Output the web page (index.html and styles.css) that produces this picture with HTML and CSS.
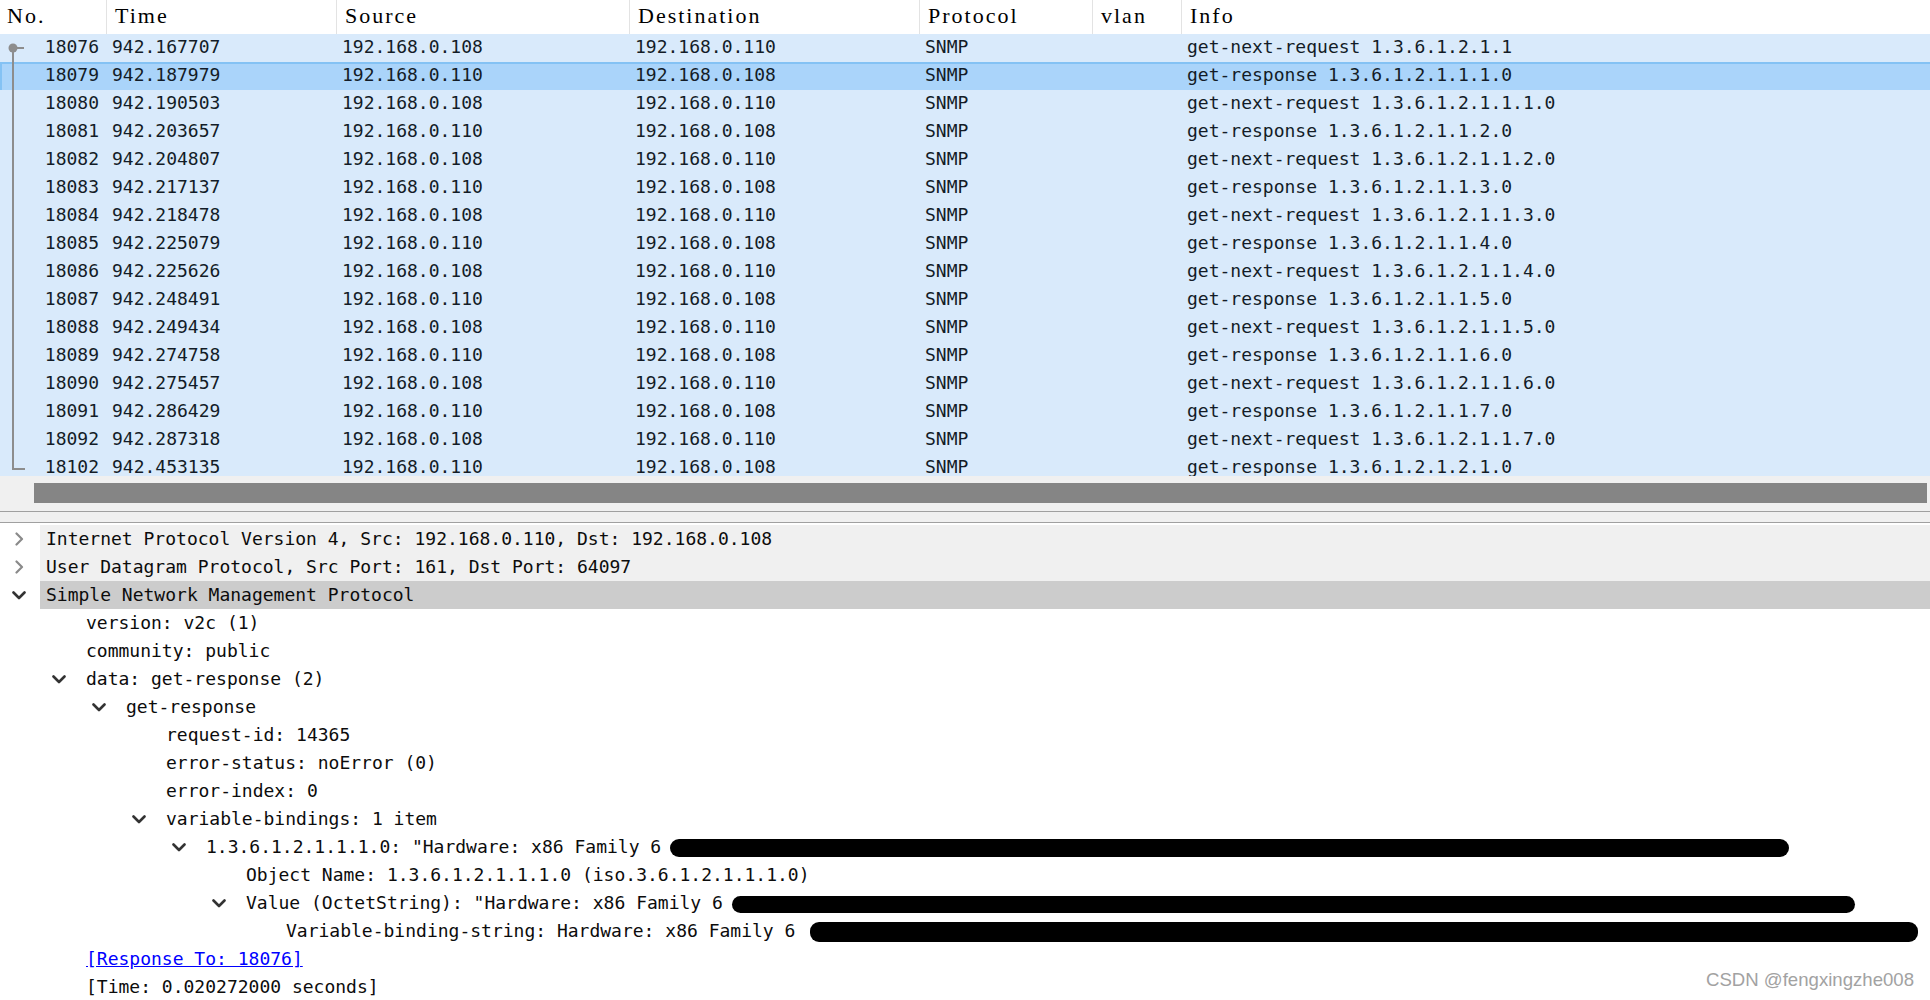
FILE: index.html
```html
<!DOCTYPE HTML>
<html>
<head>
<link rel="stylesheet" href="styles.css">
</head>
<body>
<div id="app" class="app">
    <section class="packet-list">
        <div class="list-header">
            <span>No.</span>
            <span>Time</span>
            <span>Source</span>
            <span>Destination</span>
            <span>Protocol</span>
            <span>vlan</span>
            <span>Info</span>
        </div>
        <div class="rows">
            <div class="packet"><span class="no">18076</span><span>942.167707</span><span>192.168.0.108</span><span>192.168.0.110</span><span>SNMP</span><span></span><span>get-next-request 1.3.6.1.2.1.1</span></div>
            <div class="packet selected"><span class="no">18079</span><span>942.187979</span><span>192.168.0.110</span><span>192.168.0.108</span><span>SNMP</span><span></span><span>get-response 1.3.6.1.2.1.1.1.0</span></div>
            <div class="packet"><span class="no">18080</span><span>942.190503</span><span>192.168.0.108</span><span>192.168.0.110</span><span>SNMP</span><span></span><span>get-next-request 1.3.6.1.2.1.1.1.0</span></div>
            <div class="packet"><span class="no">18081</span><span>942.203657</span><span>192.168.0.110</span><span>192.168.0.108</span><span>SNMP</span><span></span><span>get-response 1.3.6.1.2.1.1.2.0</span></div>
            <div class="packet"><span class="no">18082</span><span>942.204807</span><span>192.168.0.108</span><span>192.168.0.110</span><span>SNMP</span><span></span><span>get-next-request 1.3.6.1.2.1.1.2.0</span></div>
            <div class="packet"><span class="no">18083</span><span>942.217137</span><span>192.168.0.110</span><span>192.168.0.108</span><span>SNMP</span><span></span><span>get-response 1.3.6.1.2.1.1.3.0</span></div>
            <div class="packet"><span class="no">18084</span><span>942.218478</span><span>192.168.0.108</span><span>192.168.0.110</span><span>SNMP</span><span></span><span>get-next-request 1.3.6.1.2.1.1.3.0</span></div>
            <div class="packet"><span class="no">18085</span><span>942.225079</span><span>192.168.0.110</span><span>192.168.0.108</span><span>SNMP</span><span></span><span>get-response 1.3.6.1.2.1.1.4.0</span></div>
            <div class="packet"><span class="no">18086</span><span>942.225626</span><span>192.168.0.108</span><span>192.168.0.110</span><span>SNMP</span><span></span><span>get-next-request 1.3.6.1.2.1.1.4.0</span></div>
            <div class="packet"><span class="no">18087</span><span>942.248491</span><span>192.168.0.110</span><span>192.168.0.108</span><span>SNMP</span><span></span><span>get-response 1.3.6.1.2.1.1.5.0</span></div>
            <div class="packet"><span class="no">18088</span><span>942.249434</span><span>192.168.0.108</span><span>192.168.0.110</span><span>SNMP</span><span></span><span>get-next-request 1.3.6.1.2.1.1.5.0</span></div>
            <div class="packet"><span class="no">18089</span><span>942.274758</span><span>192.168.0.110</span><span>192.168.0.108</span><span>SNMP</span><span></span><span>get-response 1.3.6.1.2.1.1.6.0</span></div>
            <div class="packet"><span class="no">18090</span><span>942.275457</span><span>192.168.0.108</span><span>192.168.0.110</span><span>SNMP</span><span></span><span>get-next-request 1.3.6.1.2.1.1.6.0</span></div>
            <div class="packet"><span class="no">18091</span><span>942.286429</span><span>192.168.0.110</span><span>192.168.0.108</span><span>SNMP</span><span></span><span>get-response 1.3.6.1.2.1.1.7.0</span></div>
            <div class="packet"><span class="no">18092</span><span>942.287318</span><span>192.168.0.108</span><span>192.168.0.110</span><span>SNMP</span><span></span><span>get-next-request 1.3.6.1.2.1.1.7.0</span></div>
            <div class="packet"><span class="no">18102</span><span>942.453135</span><span>192.168.0.110</span><span>192.168.0.108</span><span>SNMP</span><span></span><span>get-response 1.3.6.1.2.1.2.1.0</span></div>
        </div>

        <!-- related packets marker -->
        <svg class="related" width="30" height="476" viewBox="0 0 30 476">
            <g stroke="#8d8d8d" stroke-width="2" fill="none">
                <line x1="13" y1="48" x2="24" y2="48"/>
                <line x1="13" y1="48" x2="13" y2="469"/>
                <line x1="12" y1="469" x2="25" y2="469"/>
            </g>
            <circle cx="13" cy="48" r="4.5" fill="#8d8d8d"/>
        </svg>
    </section>

    <div class="hscroll"><div class="thumb"></div></div>
    <div class="splitter"></div>

    <section class="detail">
        <div class="tree-row lvl0 top"><span class="toggle"><svg class="closed" width="9" height="14" viewBox="0 0 9 14"><polyline points="1.5,1.5 7,7 1.5,12.5"/></svg></span><span class="label">Internet Protocol Version 4, Src: 192.168.0.110, Dst: 192.168.0.108</span></div>
        <div class="tree-row lvl0 top"><span class="toggle"><svg class="closed" width="9" height="14" viewBox="0 0 9 14"><polyline points="1.5,1.5 7,7 1.5,12.5"/></svg></span><span class="label">User Datagram Protocol, Src Port: 161, Dst Port: 64097</span></div>
        <div class="tree-row lvl0 current"><span class="toggle"><svg class="open" width="14" height="9" viewBox="0 0 14 9"><polyline points="1.5,1.5 7,7 12.5,1.5"/></svg></span><span class="label">Simple Network Management Protocol</span></div>
        <div class="tree-row lvl1"><span class="toggle"></span><span class="label">version: v2c (1)</span></div>
        <div class="tree-row lvl1"><span class="toggle"></span><span class="label">community: public</span></div>
        <div class="tree-row lvl1"><span class="toggle"><svg class="open" width="14" height="9" viewBox="0 0 14 9"><polyline points="1.5,1.5 7,7 12.5,1.5"/></svg></span><span class="label">data: get-response (2)</span></div>
        <div class="tree-row lvl2"><span class="toggle"><svg class="open" width="14" height="9" viewBox="0 0 14 9"><polyline points="1.5,1.5 7,7 12.5,1.5"/></svg></span><span class="label">get-response</span></div>
        <div class="tree-row lvl3"><span class="toggle"></span><span class="label">request-id: 14365</span></div>
        <div class="tree-row lvl3"><span class="toggle"></span><span class="label">error-status: noError (0)</span></div>
        <div class="tree-row lvl3"><span class="toggle"></span><span class="label">error-index: 0</span></div>
        <div class="tree-row lvl3"><span class="toggle"><svg class="open" width="14" height="9" viewBox="0 0 14 9"><polyline points="1.5,1.5 7,7 12.5,1.5"/></svg></span><span class="label">variable-bindings: 1 item</span></div>
        <div class="tree-row lvl4"><span class="toggle"><svg class="open" width="14" height="9" viewBox="0 0 14 9"><polyline points="1.5,1.5 7,7 12.5,1.5"/></svg></span><span class="label">1.3.6.1.2.1.1.1.0: "Hardware: x86 Family 6 <span class="redact r1"></span></span></div>
        <div class="tree-row lvl5"><span class="toggle"></span><span class="label">Object Name: 1.3.6.1.2.1.1.1.0 (iso.3.6.1.2.1.1.1.0)</span></div>
        <div class="tree-row lvl5"><span class="toggle"><svg class="open" width="14" height="9" viewBox="0 0 14 9"><polyline points="1.5,1.5 7,7 12.5,1.5"/></svg></span><span class="label">Value (OctetString): "Hardware: x86 Family 6 <span class="redact r2"></span></span></div>
        <div class="tree-row lvl6"><span class="toggle"></span><span class="label">Variable-binding-string: Hardware: x86 Family 6 <span class="redact r3"></span></span></div>
        <div class="tree-row lvl1"><span class="toggle"></span><span class="label"><a class="link">[Response To: 18076]</a></span></div>
        <div class="tree-row lvl1"><span class="toggle"></span><span class="label">[Time: 0.020272000 seconds]</span></div>
    </section>

    <div class="watermark">CSDN @fengxingzhe008</div>
</div>
</body>
</html>
```

FILE: styles.css
```css
body {
    margin: 0;
    padding: 0;
    background: #fff;
    color: #0c0c0c;
    font-family: "DejaVu Sans Mono", "Liberation Mono", monospace;
    font-size: 18px;
}

.app {
    position: relative;
    width: 1930px;
    height: 1000px;
    overflow: hidden;
    display: flex;
    flex-direction: column;
}

/* packet list */
.packet-list {
    position: relative;
    flex: none;
}

.list-header,
.packet {
    display: grid;
    grid-template-columns: 106px 230px 293px 290px 173px 89px 1fr;
}

.list-header {
    height: 34px;
    background: #fff;
    color: #000;
    font-family: "Liberation Serif", serif;
    font-size: 22px;
    letter-spacing: 2px;
    line-height: 32px;
}

.list-header span {
    padding-left: 8px;
    border-left: 1px solid #e3e3e3;
}

.list-header span:first-child {
    border-left: none;
    padding-left: 7px;
}

/* list viewport: the last row is cut by the scroll bar */
.rows {
    height: 442px;
    overflow: hidden;
    background: #d9eafb;
}

.packet {
    height: 28px;
    line-height: 25px;
    background: #d9eafb;
    color: #131c27;
    white-space: nowrap;
}

.packet span {
    padding-left: 6px;
}

.packet .no {
    text-align: right;
    padding-right: 7px;
}

.packet.selected {
    background: #aad4fa;
    box-shadow: inset 0 2px #84c2f4, inset 2px 0 #84c2f4;
}

.related {
    position: absolute;
    left: 0;
    top: 0;
    pointer-events: none;
}

/* scroll bar + splitter */
.hscroll {
    flex: none;
    height: 35px;
    background: #f0f0f0;
    padding: 7px 3px 0 34px;
    box-sizing: border-box;
}

.hscroll .thumb {
    height: 20px;
    background: #858585;
}

.splitter {
    flex: none;
    height: 10px;
    background: #f0f0f0;
    border-top: 1px solid #a0a0a0;
    border-bottom: 1px solid #a0a0a0;
}

/* protocol tree */
.detail {
    padding-top: 2px;
}

.tree-row {
    display: flex;
    align-items: center;
    height: 28px;
    line-height: 28px;
    white-space: nowrap;
}

.tree-row .toggle {
    flex: none;
    width: 28px;
    height: 28px;
    display: flex;
    align-items: center;
}

.tree-row .label {
    flex: 1;
    padding-left: 6px;
    height: 28px;
}

.tree-row.top .label {
    background: #f0f0f0;
}

.tree-row.current .label {
    background: #cccccc;
}

.lvl0 { padding-left: 12px; }
.lvl1 { padding-left: 52px; }
.lvl2 { padding-left: 92px; }
.lvl3 { padding-left: 132px; }
.lvl4 { padding-left: 172px; }
.lvl5 { padding-left: 212px; }
.lvl6 { padding-left: 252px; }

.toggle svg {
    fill: none;
    stroke-linecap: round;
    stroke-linejoin: round;
}

.toggle svg.closed {
    margin-left: 3px;
    stroke: #8a8a8a;
    stroke-width: 2.2;
}

.toggle svg.open {
    stroke: #333;
    stroke-width: 2.6;
}

.link {
    color: #0000ff;
    text-decoration: underline;
}

.redact {
    display: inline-block;
    vertical-align: middle;
    background: #000;
    border-radius: 9px;
    margin-left: -2px;
}

.r1 { width: 1119px; height: 18px; }
.r2 { width: 1123px; height: 17px; }
.r3 { width: 1108px; height: 20px; margin-left: 4px; }

.watermark {
    position: absolute;
    right: 16px;
    bottom: 9px;
    font-family: "Liberation Sans", Arial, sans-serif;
    font-size: 18.6px;
    color: #a2a2a2;
    text-shadow: 0 0 2px #fff;
}
```
